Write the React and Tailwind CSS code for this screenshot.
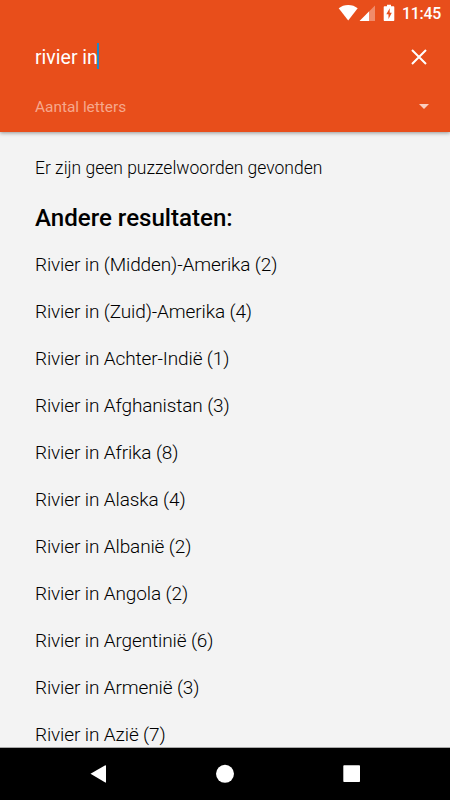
import React, { useState } from 'react';

const results = [
  { name: 'Rivier in (Midden)-Amerika', count: 2 },
  { name: 'Rivier in (Zuid)-Amerika', count: 4 },
  { name: 'Rivier in Achter-Indië', count: 1 },
  { name: 'Rivier in Afghanistan', count: 3 },
  { name: 'Rivier in Afrika', count: 8 },
  { name: 'Rivier in Alaska', count: 4 },
  { name: 'Rivier in Albanië', count: 2 },
  { name: 'Rivier in Angola', count: 2 },
  { name: 'Rivier in Argentinië', count: 6 },
  { name: 'Rivier in Armenië', count: 3 },
  { name: 'Rivier in Azië', count: 7 }
];

function StatusBar() {
  return (
    <div className="flex h-7 items-center pl-[338px] text-white">
      <svg className="shrink-0" width="64" height="28" viewBox="0 0 64 28" fill="currentColor">
        <path d="M.7 8.3C3.3 6.2 6.500 5 10.200 5s6.900 1.200 9.500 3.300L10.200 20.500z" />
        <path d="M37 5.500v15.500H21.600z" fillOpacity="0.35" />
        <path d="M31 11.400V21h-9.400z" />
        <path
          fillRule="evenodd"
          d="M49 4.700h4V6.300h2.300c.6 0 1 .4 1 1V20c0 .6-.4 1-1 1h-8.600c-.6 0-1-.4-1-1V7.300c0-.6.4-1 1-1H49zM51.700 8.300l-3.400 6h2.200v4.700l3.300-6.200h-2.100z"
        />
      </svg>
      <span className="text-[15.8px] leading-7 font-medium tracking-[-0.2px]">11:45</span>
    </div>
  );
}

function SearchHeader({ query, onClear }) {
  return (
    <header className="relative h-[132px] shrink-0 bg-[#e84e1b] shadow-[0_1px_4px_rgba(0,0,0,0.4)]">
      <StatusBar />
      <div className="flex h-[58px] items-center justify-between pr-[23px] pl-[35px]">
        <div className="flex items-center text-[19.5px] leading-[30px] text-white">
          <span className="w-[62px] pt-px whitespace-nowrap">{query}</span>
          <span className="h-[26px] w-[2px] shrink-0 -translate-y-[1px] bg-[#1e88c8]" />
        </div>
        <button onClick={onClear} aria-label="Wissen">
          <svg width="16" height="16" viewBox="0 0 16 16" stroke="white" strokeWidth="2">
            <path d="M1 1l14 14M15 1L1 15" />
          </svg>
        </button>
      </div>
      <div className="flex h-[41px] items-center justify-between pr-[21px] pl-[35px]">
        <span className="pt-[2px] text-[15.4px] leading-[23px] text-[#f6a88c]">Aantal letters</span>
        <svg width="10" height="5" viewBox="0 0 10 5" fill="#fbcdbf">
          <path d="M0 0h10L5 5z" />
        </svg>
      </div>
    </header>
  );
}

function NavBar() {
  return (
    <nav className="flex h-[53px] shrink-0 items-center justify-center border-t border-[#a8a8a8] bg-black">
      <svg width="450" height="52" viewBox="0 0 450 52" fill="white">
        <path d="M90.500 25.800L105.300 17.200Q106 17 106 18v15.800Q106 35 105.300 34.600z" />
        <circle cx="225" cy="25.800" r="9" />
        <rect x="343.300" y="17.300" width="16.700" height="16.700" rx="0.800" />
      </svg>
    </nav>
  );
}

function App() {
  const [query, setQuery] = useState('rivier in');

  return (
    <div className="flex h-[800px] w-[450px] flex-col overflow-hidden bg-[#f3f3f3] font-['Roboto',sans-serif]">
      <SearchHeader query={query} onClear={() => setQuery('')} />
      <main className="min-h-0 flex-1 overflow-hidden px-[35px] pt-[24px] text-black">
        <p className="text-[17.500px] leading-6 font-light">Er zijn geen puzzelwoorden gevonden</p>
        <h2 className="mt-[22px] text-[24.100px] leading-8 font-medium">Andere resultaten:</h2>
        <ul className="mt-[7px]">
          {results.map((item) => (
            <li key={item.name} className="h-[47.05px] text-[19px] leading-[47px] font-light tracking-[-0.12px]">
              {item.name} ({item.count})
            </li>
          ))}
        </ul>
      </main>
      <NavBar />
    </div>
  );
}

export default App;
